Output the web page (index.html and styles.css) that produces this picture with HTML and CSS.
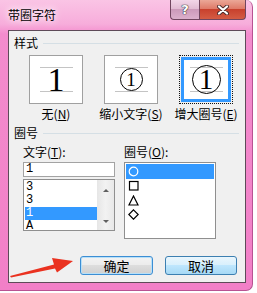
FILE: index.html
```html
<!DOCTYPE html>
<html lang="zh-CN">
<head>
<meta charset="UTF-8">
<title>带圈字符</title>
<link rel="stylesheet" href="styles.css">
</head>
<body>

<div class="window">
  <div class="titlebar">
    <span class="title">带圈字符</span>
    <div class="caption">
      <span class="cbtn help">?</span>
      <span class="cbtn close">
        <svg width="12" height="10" viewBox="0 0 12 10">
          <path d="M2 1.5 L10 8.5 M10 1.5 L2 8.5" stroke="#4a2a2a" stroke-width="4" stroke-linecap="round"/>
          <path d="M2 1.5 L10 8.5 M10 1.5 L2 8.5" stroke="#fff" stroke-width="2.2" stroke-linecap="round"/>
        </svg>
      </span>
    </div>
  </div>

  <div class="client">
    <div class="group-head"><span>样式</span><i class="rule"></i></div>
    <div class="styles">
      <div class="opt">
        <div class="box"><div class="face"><div class="guide"><span class="big">1</span></div></div></div>
        <div class="cap">无(<u>N</u>)</div>
      </div>
      <div class="opt">
        <div class="box"><div class="face"><div class="guide"><span class="ring small">1</span></div></div></div>
        <div class="cap">缩小文字(<u>S</u>)</div>
      </div>
      <div class="opt">
        <div class="box sel"><div class="face"><div class="guide"><span class="ring large">1</span></div></div></div>
        <div class="cap">增大圈号(<u>E</u>)</div>
      </div>
    </div>

    <div class="group-head"><span>圈号</span><i class="rule"></i></div>
    <div class="cols">
      <div class="col">
        <label>文字(<u>T</u>):</label>
        <div class="input">1</div>
        <div class="list short">
          <div class="items">
            <div class="item">3</div>
            <div class="item">3</div>
            <div class="item sel">1</div>
            <div class="item">A</div>
          </div>
          <div class="sbar"><i class="up"></i><i class="down"></i></div>
        </div>
      </div>
      <div class="col">
        <label>圈号(<u>O</u>):</label>
        <div class="list tall">
          <div class="row sel"><svg width="11" height="11" viewBox="0 0 11 11"><circle cx="5.5" cy="5.5" r="4.3" fill="none" stroke="#fff" stroke-width="1.2"/></svg></div>
          <div class="row"><svg width="11" height="11" viewBox="0 0 11 11"><rect x="1.5" y="1.5" width="8.5" height="8.5" fill="none" stroke="#000" stroke-width="1.2"/></svg></div>
          <div class="row"><svg width="11" height="11" viewBox="0 0 11 11"><path d="M5.5 1 L10 10 L1 10 Z" fill="none" stroke="#000" stroke-width="1.2"/></svg></div>
          <div class="row"><svg width="11" height="11" viewBox="0 0 11 11"><path d="M5.5 0.8 L10.2 5.5 L5.5 10.2 L0.8 5.5 Z" fill="none" stroke="#000" stroke-width="1.2"/></svg></div>
        </div>
      </div>
    </div>

    <div class="buttons">
      <span class="btn def">确定</span>
      <span class="btn hot">取消</span>
    </div>
  </div>

  <!-- 标注箭头 -->
  <svg class="arrow" width="80" height="30" viewBox="0 0 80 30">
    <polygon points="10,26 54,14.5 52,8 73,11 57,22.5 55,18.5 11,27.5" fill="#ea3220"/>
  </svg>
</div>

</body>
</html>
```

FILE: styles.css
```css
*{
  margin: 0;
  padding: 0;
  box-sizing: border-box;
}
body{
  background: #fff;
  font-family: "Noto Sans CJK SC", sans-serif;
  font-size: 12px;
  color: #000;
}
.window{
  position: relative;
  width: 253px;
  height: 291px;
  display: flex;
  flex-direction: column;
  background: linear-gradient(to bottom, #fac4e5 0, #f7addb 24px, #f38ccd 34px, #f27fc7 100%);
  border-right: 1px solid #b85392;
  border-bottom: 1px solid #b85392;
  border-radius: 0 7px 7px 0;
}
.titlebar{
  height: 30px;
  display: flex;
  justify-content: space-between;
  padding: 0 6px 0 8px;
}
.title{
  padding-top: 8px;
  line-height: 14px;
  text-shadow: 0 0 6px #fff, 0 0 10px #fff;
}
.caption{
  display: flex;
  height: 20px;
}
.cbtn{
  height: 20px;
  display: flex;
  align-items: center;
  justify-content: center;
  border: 1px solid #70465f;
  border-top: none;
}
.help{
  width: 29px;
  border-right: none;
  border-radius: 0 0 0 4px;
  background: linear-gradient(to bottom, #f2d6e8 0, #e2bcd4 45%, #cc9aba 50%, #dcb0cc 100%);
  color: #fff;
  font-family: "DejaVu Sans", sans-serif;
  font-weight: bold;
  font-size: 13px;
  text-shadow: 0 0 1px #333, 0 0 1px #333, 0 0 1px #333;
}
.close{
  width: 47px;
  border-radius: 0 0 4px 0;
  background: linear-gradient(to bottom, #eba797 0, #df7b69 45%, #c8412d 50%, #d45c44 100%);
}
.client{
  margin: 0 6px 0 8px;
  height: 253px;
  background: #f0f0f0;
  border: 1px solid #5e4a58;
  padding: 0 6px 7px 0;
  display: flex;
  flex-direction: column;
}
.group-head{
  margin-top: 5px;
  height: 14px;
  line-height: 14px;
  padding-left: 5px;
  display: flex;
  align-items: center;
}
.rule{
  flex: 1;
  height: 1px;
  margin-left: 5px;
  background: #d5dfe5;
}
.styles{
  display: flex;
  gap: 21px;
  padding-left: 20px;
  margin-top: 5px;
}
.opt{
  width: 54px;
  display: flex;
  flex-direction: column;
  align-items: center;
}
.box{
  width: 54px;
  height: 49px;
  border: 1px solid #a0a0a0;
  display: flex;
}
.face{
  flex: 1;
  background: #fff;
  display: flex;
  align-items: center;
  justify-content: center;
}
.box.sel{
  border: 1px dotted #111;
  padding: 1px;
}
.box.sel .face{
  border: 3px solid #3399ff;
}
.guide{
  width: 33px;
  height: 25px;
  border-top: 1px solid #c4c4c4;
  border-bottom: 1px solid #c4c4c4;
  display: flex;
  align-items: center;
  justify-content: center;
}
.big{
  font-family: "Liberation Serif", serif;
  font-size: 34px;
  line-height: 1;
}
.ring{
  border: 1.5px solid #000;
  border-radius: 50%;
  display: flex;
  align-items: center;
  justify-content: center;
  font-family: "Liberation Serif", serif;
  line-height: 1;
  flex-shrink: 0;
}
.ring.small{
  width: 23px;
  height: 23px;
  font-size: 19px;
}
.ring.large{
  width: 29px;
  height: 29px;
  font-size: 29px;
}
.cap{
  margin-top: 3px;
  line-height: 14px;
  white-space: nowrap;
}
.cols{
  display: flex;
  gap: 9px;
  padding-left: 14px;
  margin-top: 5px;
}
.col{
  width: 92px;
}
.col label{
  display: block;
  height: 14px;
  line-height: 14px;
  white-space: nowrap;
}
.input{
  margin-top: 3px;
  height: 15px;
  border: 1px solid #a3a3a3;
  background: #fff;
  padding-left: 2px;
  line-height: 13px;
  font-family: "Liberation Mono", monospace;
}
.list{
  background: #fff;
  border: 1px solid #8f8f8f;
}
.list.short{
  margin-top: 2px;
  height: 52px;
  display: flex;
}
.items{
  flex: 1;
  padding: 1px 0 0 1px;
}
.item{
  height: 13px;
  line-height: 13px;
  padding-left: 1px;
  font-family: "Liberation Mono", monospace;
}
.item.sel,
.row.sel{
  background: #3399ff;
  color: #fff;
}
.sbar{
  width: 17px;
  background: linear-gradient(to right, #e6e6e6, #f2f2f2 50%, #e8e8e8);
  display: flex;
  flex-direction: column;
  justify-content: space-between;
  align-items: center;
  padding: 9px 0 7px;
}
.sbar i{
  width: 0;
  height: 0;
  border-left: 3.5px solid transparent;
  border-right: 3.5px solid transparent;
}
.sbar .up{
  border-bottom: 3px solid #606060;
}
.sbar .down{
  border-top: 3px solid #606060;
}
.list.tall{
  margin-top: 3px;
  height: 77px;
  padding-top: 1px;
}
.row{
  height: 14.5px;
  margin: 0 1px;
  padding-left: 2px;
  display: flex;
  align-items: center;
}
.buttons{
  margin-top: 17px;
  display: flex;
  justify-content: flex-end;
  gap: 12px;
  padding-right: 2px;
}
.btn{
  width: 73px;
  height: 19px;
  line-height: 17px;
  text-align: center;
  border: 1px solid #707070;
  border-radius: 3px;
  font-size: 13px;
}
.btn.def{
  border-color: #3c8ed4;
  background: linear-gradient(to bottom, #f3f3f3 0, #ececec 45%, #dddddd 50%, #d0d0d0 100%);
  box-shadow: inset 0 0 0 1px #b8e0f8;
}
.btn.hot{
  width: 72px;
  border-color: #3c7fb1;
  background: linear-gradient(to bottom, #eaf6fd 0, #d9f0fc 45%, #bee6fd 50%, #a7d9f5 100%);
}
.arrow{
  position: absolute;
  left: 0;
  top: 250px;
}
```
